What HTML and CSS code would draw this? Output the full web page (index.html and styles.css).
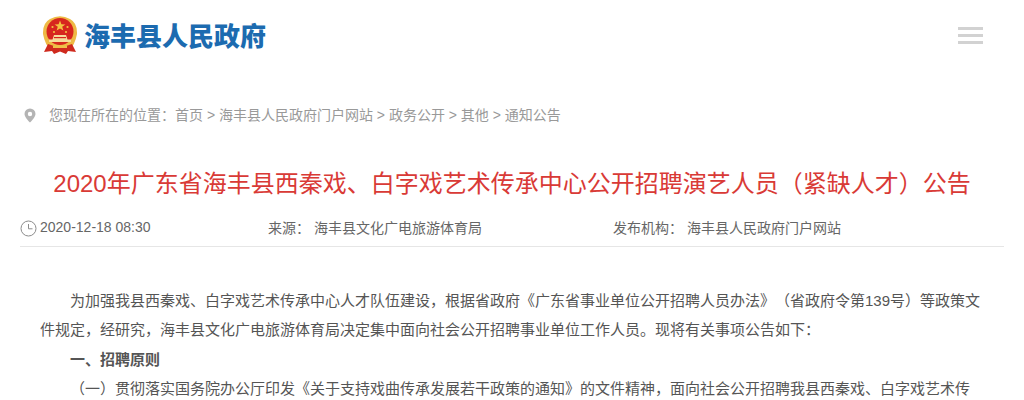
FILE: index.html
```html
<!DOCTYPE html>
<html lang="zh-CN">
<head>
<meta charset="utf-8">
<title>2020年广东省海丰县西秦戏、白字戏艺术传承中心公开招聘演艺人员（紧缺人才）公告</title>
<link rel="stylesheet" href="styles.css">
</head>
<body>
<header class="top">
  <div class="logo">
    <svg class="emblem" width="36" height="40" viewBox="0 0 36 40">
      <path d="M9 35 Q3 30 1 19 Q0.500 8 8 4 Q18 -1.500 28 4 Q35.500 8 35 19 Q33 30 27 35z" fill="#eeba45"/>
      <circle cx="18" cy="16.500" r="13.500" fill="#d7261e"/>
      <path d="M18 5.500l1.400 3.800 4 .1-3.200 2.400 1.200 3.800-3.400-2.200-3.400 2.200 1.200-3.800-3.200-2.400 4-.1z" fill="#f3c342"/>
      <circle cx="10.500" cy="12" r="1.100" fill="#f3c342"/>
      <circle cx="25.500" cy="12" r="1.100" fill="#f3c342"/>
      <circle cx="12" cy="17" r="1.100" fill="#f3c342"/>
      <circle cx="24" cy="17" r="1.100" fill="#f3c342"/>
      <path d="M7 27h22v-2.500h-3.500l-1.500-4.500H12l-1.500 4.500H7z" fill="#f6dc9a"/>
      <path d="M12 22h12v1.200H12z" fill="#d7261e"/>
      <path d="M6 29 Q18 34 30 29 L34 37 L26 36 L24 39 L18 36.500 L12 39 L10 36 L2 37z" fill="#cf2a1e"/>
      <path d="M11 30.500h14v2.500H11z" fill="#efc04a"/>
    </svg>
    <span class="logo-text">海丰县人民政府</span>
  </div>
  <div class="menu" aria-label="菜单"><i></i><i></i><i></i></div>
</header>

<nav class="crumbs">
  <svg class="pin" width="12" height="15" viewBox="0 0 12 15">
    <path fill-rule="evenodd" d="M6 .5a5.500 5.500 0 0 1 5.500 5.500C11.500 9.500 6 14.500 6 14.500S.5 9.500.5 6A5.500 5.500 0 0 1 6 .5zM6 3.800a2.200 2.200 0 1 0 0 4.400 2.200 2.200 0 0 0 0-4.400z" fill="#b4b4b4"/>
  </svg>
  <span>您现在所在的位置：首页 &gt; 海丰县人民政府门户网站 &gt; 政务公开 &gt; 其他 &gt; 通知公告</span>
</nav>

<h1 class="title">2020年广东省海丰县西秦戏、白字戏艺术传承中心公开招聘演艺人员（紧缺人才）公告</h1>

<div class="meta">
  <div class="meta-date">
    <svg class="clock" width="17" height="17" viewBox="0 0 17 17">
      <circle cx="8.500" cy="8.500" r="7.500" fill="none" stroke="#8c8c8c" stroke-width="1"/>
      <path d="M8.500 4v4.800h4" fill="none" stroke="#8c8c8c" stroke-width="1"/>
    </svg>
    <span>2020-12-18 08:30</span>
  </div>
  <div class="meta-source">来源：&nbsp;海丰县文化广电旅游体育局</div>
  <div class="meta-org">发布机构：&nbsp;海丰县人民政府门户网站</div>
</div>

<article class="content">
  <p>为加强我县西秦戏、白字戏艺术传承中心人才队伍建设，根据省政府《广东省事业单位公开招聘人员办法》（省政府令第139号）等政策文件规定，经研究，海丰县文化广电旅游体育局决定集中面向社会公开招聘事业单位工作人员。现将有关事项公告如下：</p>
  <p><strong>一、招聘原则</strong></p>
  <p>（一）贯彻落实国务院办公厅印发《关于支持戏曲传承发展若干政策的通知》的文件精神，面向社会公开招聘我县西秦戏、白字戏艺术传</p>
</article>
</body>
</html>
```
FILE: styles.css
```css
* { box-sizing: border-box; }
html, body { margin: 0; padding: 0; background: #fff; }
body {
  font-family: "Liberation Sans", "Noto Sans CJK SC", sans-serif;
  color: #666;
  overflow: hidden;
  height: 400px;
  text-spacing-trim: space-all;
}
.top {
  display: flex;
  align-items: center;
  justify-content: space-between;
  height: 70px;
  padding: 0 41px 0 42px;
}
.logo { display: flex; align-items: center; gap: 6px; }
.emblem { display: block; }
.logo-text {
  font-family: "Noto Sans CJK SC", sans-serif;
  font-size: 26px;
  font-weight: 900;
  line-height: 36px;
  color: #1c6bb0;
}
.menu { display: flex; flex-direction: column; gap: 4px; width: 25px; }
.menu i { display: block; height: 3px; background: #d2d2d2; }
.crumbs {
  display: flex;
  align-items: center;
  gap: 13px;
  margin-top: 35px;
  padding-left: 24px;
  font-size: 14px;
  line-height: 20px;
  color: #999;
}
.pin { display: block; }
.title {
  margin: 39px 0 0;
  text-align: center;
  font-size: 24px;
  font-weight: 400;
  line-height: 40px;
  color: #d93a36;
}
.meta {
  display: flex;
  align-items: center;
  height: 40px;
  margin: 3px 20px 0;
  border-bottom: 1px solid #e6e6e6;
  font-size: 14px;
  color: #666;
}
.meta-date { display: flex; align-items: center; gap: 3px; width: 248px; }
.meta-source { width: 345px; }
.clock { display: block; margin-top: 4px; }
.content {
  padding: 0 42px 0 40px;
  margin-top: 39px;
  font-size: 15px;
  line-height: 29.300px;
  color: #555;
}
.content p { margin: 0; text-indent: 30px; }
.content strong { font-weight: 700; color: #555; }
```
